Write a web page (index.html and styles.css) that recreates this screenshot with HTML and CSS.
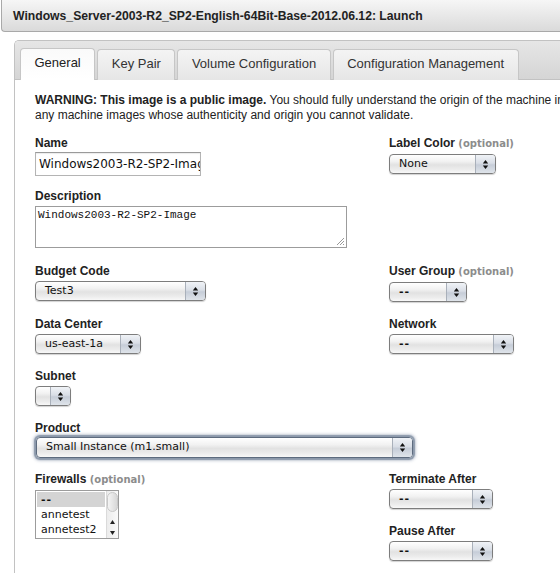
FILE: index.html
```html
<!DOCTYPE html>
<html>
<head>
<meta charset="utf-8">
<link rel="stylesheet" href="styles.css">
</head>
<body>
<div class="page">
  <div class="header"><h1 class="title">Windows_Server-2003-R2_SP2-English-64Bit-Base-2012.06.12: Launch</h1></div>
  <div class="panel">
    <div class="tabs">
      <div class="tab active">General</div>
      <div class="tab">Key Pair</div>
      <div class="tab">Volume Configuration</div>
      <div class="tab">Configuration Management</div>
    </div>
    <div class="content">
      <p class="warning"><b>WARNING: This image is a public image.</b> You should fully understand the origin of the machine images you launch. Do not launch<br>any machine images whose authenticity and origin you cannot validate.</p>

      <div class="row">
        <div class="col-l">
          <div class="field field-name">
            <label class="lbl">Name</label>
            <div class="input">Windows2003-R2-SP2-Image</div>
          </div>
        </div>
        <div class="col-r">
          <div class="field">
            <label class="lbl">Label Color <span class="opt">(optional)</span></label>
            <div class="sel w-label"><span class="sel-text">None</span><span class="sel-arrow"><svg width="7" height="11" viewBox="0 0 7 11"><path d="M3.5 1L6.2 4.6H0.8Z M0.8 6.4H6.2L3.5 10Z" fill="#111"/></svg></span></div>
          </div>
        </div>
      </div>

      <div class="field field-desc">
        <label class="lbl">Description</label>
        <div class="textarea">Windows2003-R2-SP2-Image<svg class="grip" width="10" height="10" viewBox="0 0 10 10"><path d="M9 2L2 9M9 5L5 9M9 8L8 9" stroke="#999" stroke-width="1"/></svg></div>
      </div>

      <div class="row">
        <div class="col-l">
          <div class="field">
            <label class="lbl">Budget Code</label>
            <div class="sel w-budget"><span class="sel-text">Test3</span><span class="sel-arrow"><svg width="7" height="11" viewBox="0 0 7 11"><path d="M3.5 1L6.2 4.6H0.8Z M0.8 6.4H6.2L3.5 10Z" fill="#111"/></svg></span></div>
          </div>
        </div>
        <div class="col-r">
          <div class="field">
            <label class="lbl">User Group <span class="opt">(optional)</span></label>
            <div class="sel w-group"><span class="sel-text dash">--</span><span class="sel-arrow"><svg width="7" height="11" viewBox="0 0 7 11"><path d="M3.5 1L6.2 4.6H0.8Z M0.8 6.4H6.2L3.5 10Z" fill="#111"/></svg></span></div>
          </div>
        </div>
      </div>

      <div class="row">
        <div class="col-l">
          <div class="field">
            <label class="lbl">Data Center</label>
            <div class="sel w-dc"><span class="sel-text">us-east-1a</span><span class="sel-arrow"><svg width="7" height="11" viewBox="0 0 7 11"><path d="M3.5 1L6.2 4.6H0.8Z M0.8 6.4H6.2L3.5 10Z" fill="#111"/></svg></span></div>
          </div>
        </div>
        <div class="col-r">
          <div class="field">
            <label class="lbl">Network</label>
            <div class="sel w-net"><span class="sel-text dash">--</span><span class="sel-arrow"><svg width="7" height="11" viewBox="0 0 7 11"><path d="M3.5 1L6.2 4.6H0.8Z M0.8 6.4H6.2L3.5 10Z" fill="#111"/></svg></span></div>
          </div>
        </div>
      </div>

      <div class="field">
        <label class="lbl">Subnet</label>
        <div class="sel w-subnet"><span class="sel-text"></span><span class="sel-arrow"><svg width="7" height="11" viewBox="0 0 7 11"><path d="M3.5 1L6.2 4.6H0.8Z M0.8 6.4H6.2L3.5 10Z" fill="#111"/></svg></span></div>
      </div>

      <div class="field field-product">
        <label class="lbl">Product</label>
        <div class="sel w-product focus"><span class="sel-text">Small Instance (m1.small)</span><span class="sel-arrow"><svg width="7" height="11" viewBox="0 0 7 11"><path d="M3.5 1L6.2 4.6H0.8Z M0.8 6.4H6.2L3.5 10Z" fill="#111"/></svg></span></div>
      </div>

      <div class="row">
        <div class="col-l">
          <div class="field">
            <label class="lbl">Firewalls <span class="opt">(optional)</span></label>
            <div class="listbox">
              <div class="items">
                <div class="item selected">--</div>
                <div class="item">annetest</div>
                <div class="item">annetest2</div>
              </div>
              <div class="scrollbar">
                <div class="thumb"></div>
                <div class="sb-arrows">
                  <svg width="5" height="4" viewBox="0 0 5 4"><path d="M2.5 0L5 4H0Z" fill="#222"/></svg>
                  <svg width="5" height="4" viewBox="0 0 5 4"><path d="M0 0H5L2.5 4Z" fill="#222"/></svg>
                </div>
              </div>
            </div>
          </div>
        </div>
        <div class="col-r">
          <div class="field">
            <label class="lbl">Terminate After</label>
            <div class="sel w-term"><span class="sel-text dash">--</span><span class="sel-arrow"><svg width="7" height="11" viewBox="0 0 7 11"><path d="M3.5 1L6.2 4.6H0.8Z M0.8 6.4H6.2L3.5 10Z" fill="#111"/></svg></span></div>
          </div>
          <div class="field">
            <label class="lbl">Pause After</label>
            <div class="sel w-term"><span class="sel-text dash">--</span><span class="sel-arrow"><svg width="7" height="11" viewBox="0 0 7 11"><path d="M3.5 1L6.2 4.6H0.8Z M0.8 6.4H6.2L3.5 10Z" fill="#111"/></svg></span></div>
          </div>
        </div>
      </div>
    </div>
  </div>
</div>
</body>
</html>
```

FILE: styles.css
```css
html, body {
  margin: 0;
  padding: 0;
  background: #fff;
  overflow: hidden;
}
body {
  font-family: "Liberation Sans", Arial, sans-serif;
  color: #222;
}
.page {
  width: 560px;
  height: 573px;
  overflow: hidden;
}
.header {
  width: 700px;
  height: 32px;
  box-sizing: border-box;
  margin-left: 1px;
  border: 1px solid #a9a9a9;
  border-top: none;
  border-right: none;
  border-radius: 0 0 0 4px;
  background: linear-gradient(#f6f6f6, #dadada);
  display: flex;
  align-items: center;
  padding-left: 11px;
}
.title {
  margin: 0;
  font-size: 12.2px;
  font-weight: bold;
  color: #222;
  white-space: nowrap;
}
.panel {
  width: 680px;
  margin: 8px 0 0 14px;
  border: 1px solid #c2c2c2;
  border-right: none;
  border-bottom: none;
  border-radius: 5px 0 0 0;
  height: 560px;
}
.tabs {
  height: 39px;
  box-sizing: border-box;
  background: linear-gradient(#e6e6e6, #d5d5d5);
  border-bottom: 1px solid #c2c2c2;
  border-radius: 4px 0 0 0;
  display: flex;
  align-items: flex-end;
  gap: 2px;
  padding-left: 5px;
}
.tab {
  height: 31px;
  box-sizing: border-box;
  padding: 0 13.5px 3px;
  border: 1px solid #c6c6c6;
  border-bottom: none;
  border-radius: 4px 4px 0 0;
  background: linear-gradient(#f4f4f4, #e6e6e6);
  font-size: 13px;
  color: #333;
  display: flex;
  align-items: center;
  margin-bottom: -1px;
  white-space: nowrap;
}
.tab.active {
  height: 32px;
  padding-bottom: 4px;
  background: linear-gradient(#fafafa, #ffffff);
  color: #222;
}
.content {
  padding: 13px 0 0 20px;
  font-size: 12px;
}
.warning {
  margin: 0 0 13px 0;
  line-height: 15px;
  font-size: 12px;
  white-space: nowrap;
  color: #222;
}
.row {
  display: flex;
}
.col-l {
  width: 354px;
  flex: none;
}
.col-r {
  flex: 1;
}
.field {
  margin-bottom: 15px;
}
.field-name {
  margin-bottom: 13px;
}
.field-desc {
  margin-bottom: 16px;
}
.field-product {
  margin-bottom: 14px;
}
.lbl {
  display: block;
  font-weight: bold;
  font-size: 12px;
  line-height: 14px;
  margin-bottom: 3px;
  color: #222;
  white-space: nowrap;
}
.field-name .lbl,
.field-product .lbl {
  margin-bottom: 2px;
}
.opt {
  font-family: "DejaVu Sans", sans-serif;
  font-size: 10px;
  color: #8c8c8c;
}
.input {
  width: 166px;
  height: 24px;
  box-sizing: border-box;
  border: 1px solid #b4b4b4;
  border-top-color: #9a9a9a;
  box-shadow: inset 0 1px 1px rgba(0,0,0,0.08);
  padding: 0 3px;
  font-family: "DejaVu Sans", sans-serif;
  font-size: 12px;
  line-height: 22px;
  white-space: nowrap;
  overflow: hidden;
  color: #111;
}
.textarea {
  position: relative;
  width: 312px;
  height: 42px;
  box-sizing: border-box;
  border: 1px solid #9c9c9c;
  padding: 2px 2px;
  font-family: "Liberation Mono", "Courier New", monospace;
  font-size: 11px;
  line-height: 13px;
  color: #111;
}
.grip {
  position: absolute;
  right: 1px;
  bottom: 1px;
}
.sel {
  display: flex;
  height: 20px;
  box-sizing: border-box;
  border: 1px solid #7d7d7d;
  border-radius: 4px;
  background: linear-gradient(#ffffff 0%, #f2f2f2 35%, #e2e2e2 55%, #ececec 80%, #f8f8f8 100%);
  box-shadow: 0 1px 1px rgba(0,0,0,0.18);
  overflow: hidden;
}
.sel-text {
  flex: 1;
  padding-left: 9px;
  font-family: "DejaVu Sans", sans-serif;
  font-size: 11px;
  line-height: 18px;
  color: #111;
  white-space: nowrap;
}
.sel-text.dash {
  font-weight: bold;
  letter-spacing: 1px;
}
.sel-arrow {
  width: 19px;
  flex: none;
  border-left: 1px solid #a9b0ba;
  background: linear-gradient(#f0f3f7 0%, #d9dee6 45%, #c6cdd8 55%, #dfe4ea 100%);
  display: flex;
  align-items: center;
  justify-content: center;
}
.w-label { width: 107px; }
.w-group { width: 78px; }
.w-budget { width: 171px; }
.w-dc { width: 106px; }
.w-net { width: 125px; }
.w-subnet { width: 36px; }
.w-product { width: 377px; height: 21px; margin-left: 1px; }
.w-term { width: 104px; }
.sel.focus {
  border-color: #5d6b7e;
  box-shadow: 0 0 1px 2px #8c99ab, 0 0 3px 3px rgba(120,135,160,0.4);
}
.listbox {
  display: flex;
  width: 84px;
  height: 49px;
  box-sizing: border-box;
  border: 1px solid #9c9c9c;
  background: #fff;
}
.items {
  flex: 1;
  padding: 1px 1px 0 1px;
}
.item {
  height: 15px;
  line-height: 15px;
  padding-left: 4px;
  font-family: "DejaVu Sans", sans-serif;
  font-size: 11px;
  color: #111;
  white-space: nowrap;
}
.item.selected {
  background: #d4d4d4;
  font-weight: bold;
  letter-spacing: 1px;
}
.scrollbar {
  width: 11px;
  flex: none;
  border-left: 1px solid #dadada;
  background: linear-gradient(90deg, #ececec, #fafafa);
  display: flex;
  flex-direction: column;
  justify-content: space-between;
}
.thumb {
  height: 20px;
  margin: 1px 0 0 0;
  border-radius: 6px;
  background: linear-gradient(90deg, #f4f4f4, #d8d8d8);
  border: 1px solid #c8c8c8;
  box-sizing: border-box;
}
.sb-arrows {
  display: flex;
  flex-direction: column;
  align-items: center;
  gap: 7px;
  padding-bottom: 3px;
}
```
